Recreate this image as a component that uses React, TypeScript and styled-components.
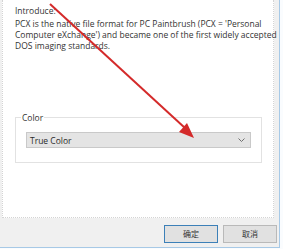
import React from "react";
import styled, { createGlobalStyle } from "styled-components";

const GlobalStyle = createGlobalStyle`
  html, body {
    margin: 0;
    padding: 0;
    background: #fafcfe;
  }
  body {
    font-family: "Open Sans", "Noto Sans CJK SC", sans-serif;
  }
`;

const Window = styled.div`
  position: relative;
  display: flex;
  flex-direction: column;
  width: 279px;
  height: 247px;
  background: #f0f0f0;
  border-right: 1px solid #a7c9e6;
  border-bottom: 1px solid #a7c9e6;
`;

const Panel = styled.div`
  box-sizing: border-box;
  flex: none;
  width: 272px;
  height: 218px;
  margin-left: 2px;
  padding: 5px 8px 0 12px;
  background: #ffffff;
  border: 1px dotted #d4d4d4;
  border-top: none;
`;

const IntroTitle = styled.div`
  height: 11px;
  font-size: 8.5px;
  line-height: 11px;
  color: #333;
`;

const IntroText = styled.div`
  height: 33px;
  margin-top: 2px;
  font-size: 8.5px;
  line-height: 11px;
  color: #333;
  white-space: nowrap;
`;

const GroupBox = styled.div`
  width: 247px;
  margin-top: 62px;
`;

const GroupHeader = styled.div`
  display: flex;
  align-items: flex-end;
  height: 9px;
  &::before,
  &::after {
    content: "";
    height: 4px;
    border-top: 1px solid #e2e2e2;
  }
  &::before {
    width: 5px;
    border-left: 1px solid #e2e2e2;
  }
  &::after {
    flex: 1;
    border-right: 1px solid #e2e2e2;
  }
`;

const GroupLabel = styled.span`
  align-self: center;
  padding: 0 1px;
  font-size: 8.5px;
  line-height: 9px;
  color: #333;
`;

const GroupBody = styled.div`
  height: 30px;
  padding: 10px 10px 0;
  border: 1px solid #e2e2e2;
  border-top: none;
`;

const Select = styled.div`
  box-sizing: border-box;
  display: flex;
  align-items: center;
  justify-content: space-between;
  width: 225px;
  height: 16px;
  padding: 0 5px 0 3px;
  background: #e4e4e4;
  border: 1px solid #c9c9c9;
  font-size: 8.5px;
  color: #2a2a2a;
`;

const Footer = styled.div`
  display: flex;
  justify-content: flex-end;
  gap: 5px;
  padding: 7px 2px 0 0;
`;

const Button = styled.button<{ $primary?: boolean }>`
  box-sizing: border-box;
  width: 54px;
  height: 18px;
  padding: 0;
  background: #e1e1e1;
  border: 1px solid ${(p) => (p.$primary ? "#3c80b8" : "#b9b9b9")};
  font-family: "Noto Sans CJK SC", sans-serif;
  font-size: 8px;
  line-height: 16px;
  color: #333;
`;

// red annotation arrow drawn over the dialog
const ArrowLayer = styled.svg`
  position: absolute;
  left: 0;
  top: 0;
  pointer-events: none;
`;

const Chevron = () => (
  <svg width="7" height="4" viewBox="0 0 7 4">
    <polyline points="0.5,0.5 3.5,3.5 6.5,0.5" fill="none" stroke="#707070" strokeWidth="1" />
  </svg>
);

export default function App() {
  return (
    <>
      <GlobalStyle />
      <Window>
        <Panel>
          <IntroTitle>Introduce:</IntroTitle>
          <IntroText>
            PCX is the native file format for PC Paintbrush (PCX = 'Personal
            <br />
            Computer eXchange') and became one of the first widely accepted
            <br />
            DOS imaging standards.
          </IntroText>
          <GroupBox>
            <GroupHeader>
              <GroupLabel>Color</GroupLabel>
            </GroupHeader>
            <GroupBody>
              <Select>
                <span>True Color</span>
                <Chevron />
              </Select>
            </GroupBody>
          </GroupBox>
        </Panel>
        <Footer>
          <Button $primary>确定</Button>
          <Button>取消</Button>
        </Footer>
        <ArrowLayer width="283" height="249">
          <line x1="50" y1="4" x2="185" y2="128" stroke="#d42a2a" strokeWidth="2" />
          <polygon points="194,138 179,132 187,123" fill="#d42a2a" />
        </ArrowLayer>
      </Window>
    </>
  );
}
